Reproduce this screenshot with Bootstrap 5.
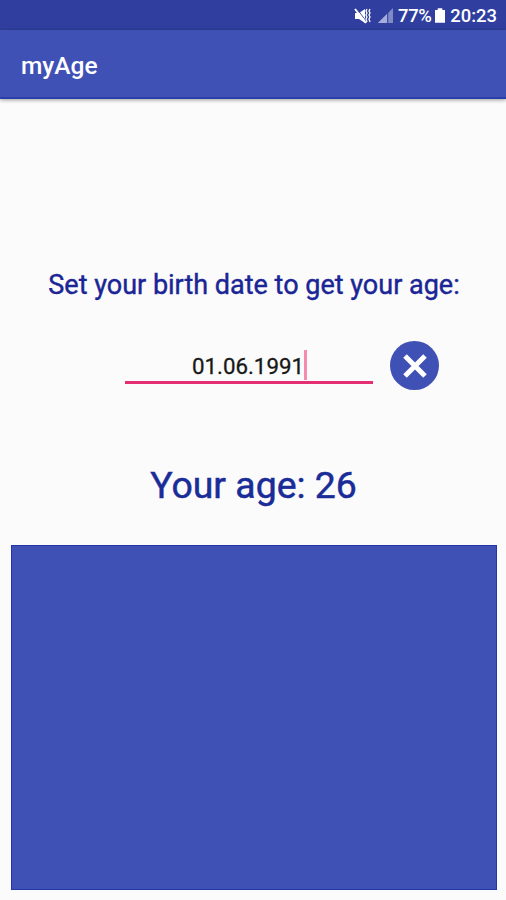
<!DOCTYPE html>
<html lang="en">
<head>
<meta charset="utf-8">
<meta name="viewport" content="width=device-width, initial-scale=1">
<title>myAge</title>
<link href="https://cdn.jsdelivr.net/npm/bootstrap@5.3.0/dist/css/bootstrap.min.css" rel="stylesheet">
<style>
body { font-family: Roboto, "Liberation Sans", sans-serif; background: #fbfbfb; height: 900px; font-weight: 500; }
.status-bar { height: 30px; background: #303f9f; font-size: 18.4px; line-height: 30px; padding: 1px 9px 0 0; }
.battery-level { letter-spacing: -.4px; margin-left: 5px; }
.battery { margin: 0 5px 0 4px; }
.mute { margin-right: 6px; }
.app-bar { height: 69px; background: #3f51b5; border-bottom: 2px solid #2c3fa8; padding: 4px 20px 0 21px; box-shadow: 0 1px 4px rgba(0,0,0,.4); }
.app-title { font-size: 24.5px; line-height: 30px; }
.prompt { margin-top: 168px; font-size: 27px; line-height: 36px; color: #1a2596; font-weight: 400; -webkit-text-stroke: .4px #1a2596; padding-left: 2px; }
.entry-row { margin-top: 38px; padding: 0 67px 0 125px; height: 50px; }
.date-field { width: 248px; height: 43px; padding: 8px 0 0 1px; border-bottom: 3px solid #e62e73; font-size: 22.3px; color: #181818; font-weight: 400; -webkit-text-stroke: .3px #181818; }
.date-text { padding-top: 3px; }
.caret { width: 3px; height: 30px; background: #f58bad; }
.clear-btn { width: 49px; height: 49px; background: #3f51b5; }
.result { margin-top: 66px; font-size: 37.4px; line-height: 56px; color: #1a2c98; font-weight: 400; -webkit-text-stroke: .5px #1a2c98; padding-left: 1px; }
.panel { margin: 32px 9px 10px 11px; height: 345px; background: #3f51b5; border: 1px solid #2236a5; }
</style>
<script src="https://cdn.jsdelivr.net/npm/bootstrap@5.3.0/dist/js/bootstrap.bundle.min.js"></script>
</head>
<body class="d-flex flex-column overflow-hidden">
<div class="status-bar d-flex align-items-center justify-content-end text-white flex-shrink-0">
  <svg class="mute" width="18" height="18" viewBox="0 0 18 18" fill="none" stroke="#fff"><path d="M1 6h4l6-4v14l-6-4H1z" fill="#fff" stroke="none"/><path d="M3 2l9 12" stroke="#303f9f" stroke-width="1"/><path d="M1 2l11 14" stroke-width="2"/><path d="M13 2l-1 2 1 2-1 2 1 2-1 2 1 3M16 2l-1 2 1 2-1 2 1 2-1 2 1 3" stroke-width="1.3"/></svg>
  <svg width="15" height="15" viewBox="0 0 15 15"><path d="M0 15L15 0V15z" fill="#7f8ac6"/><path d="M0 15L9 6V15z" fill="#a5addb"/><path d="M9.7 0v15" stroke="#303f9f"/></svg>
  <span class="battery-level">77%</span>
  <svg class="battery" width="10" height="15" viewBox="0 0 11 16"><path d="M3 0h5v2h3v14H0V2h3z" fill="#fff"/></svg>
  <span class="clock">20:23</span>
</div>
<header class="app-bar d-flex align-items-center text-white flex-shrink-0"><h1 class="app-title mb-0">myAge</h1></header>
<main>
  <p class="prompt text-center mb-0">Set your birth date to get your age:</p>
  <div class="entry-row d-flex justify-content-between">
    <div class="date-field d-flex justify-content-center align-items-center"><span class="date-text">01.06.1991</span><span class="caret"></span></div>
    <button class="clear-btn btn rounded-circle border-0 p-0 d-flex align-items-center justify-content-center" aria-label="Clear"><svg width="26" height="26" viewBox="0 0 26 26"><path d="M3 3L23 23M23 3L3 23" stroke="#fff" stroke-width="5"/></svg></button>
  </div>
  <p class="result text-center mb-0">Your age: 26</p>
  <div class="panel"></div>
</main>
</body>
</html>
